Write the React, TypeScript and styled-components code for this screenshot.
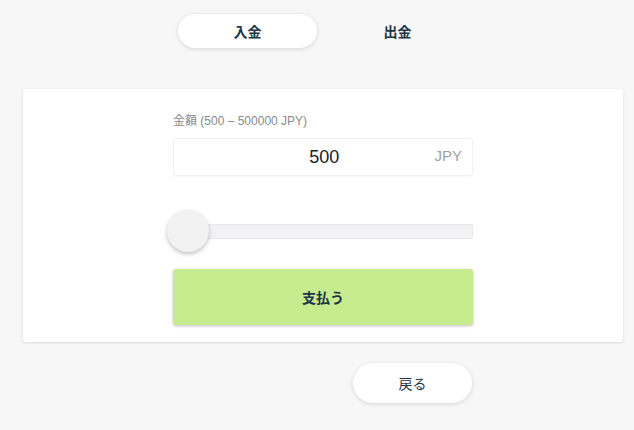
import styled, { createGlobalStyle } from "styled-components";
import { FC, useState } from "react";

const GlobalStyle = createGlobalStyle`
  html, body {
    margin: 0;
    padding: 0;
    background: #f7f7f7;
    font-family: "Liberation Sans", Arial, "Noto Sans CJK JP", sans-serif;
  }
`;

type Tab = "deposit" | "withdraw";

const App: FC = () => {
  const [tab, setTab] = useState<Tab>("deposit");
  const [amount, setAmount] = useState(500);

  return (
    <Page>
      <GlobalStyle />
      <Tabs>
        <TabButton $active={tab === "deposit"} onClick={() => setTab("deposit")}>
          入金
        </TabButton>
        <TabButton $active={tab === "withdraw"} onClick={() => setTab("withdraw")}>
          出金
        </TabButton>
      </Tabs>
      <Card>
        <Form>
          <Label>金額 (500 – 500000 JPY)</Label>
          <InputBox>
            <AmountInput
              value={amount}
              onChange={(e) => setAmount(Number(e.target.value) || 0)}
            />
            <Currency>JPY</Currency>
          </InputBox>
          <Slider>
            <Track />
            <Thumb style={{ left: `${((amount - 500) / (500000 - 500)) * 258}px` }} />
          </Slider>
          <PayButton>支払う</PayButton>
        </Form>
      </Card>
      <Footer>
        <BackButton>戻る</BackButton>
      </Footer>
    </Page>
  );
};

export default App;

const Page = styled.div`
  width: 600px;
  margin-left: 23px;
  padding-top: 14px;
  padding-bottom: 28px;
`;

const Tabs = styled.div`
  display: grid;
  grid-template-columns: 150px 150px;
  width: 300px;
  margin: 0 auto;
`;

const TabButton = styled.button<{ $active?: boolean }>`
  height: 34px;
  margin: 0 6px 0 5px;
  border: none;
  border-radius: 17px;
  background: ${({ $active }) => ($active ? "#fff" : "transparent")};
  box-shadow: ${({ $active }) =>
    $active ? "0 1px 4px rgba(0, 0, 0, 0.14)" : "none"};
  font-family: inherit;
  font-size: 14px;
  font-weight: 700;
  color: #1d3548;
  cursor: pointer;
`;

const Card = styled.div`
  margin-top: 41px;
  background: #fff;
  border-radius: 3px;
  box-shadow: 0 1px 3px rgba(0, 0, 0, 0.12);
  padding: 25px 0 17px;
`;

const Form = styled.div`
  width: 300px;
  margin: 0 auto;
  display: flex;
  flex-direction: column;
`;

const Label = styled.div`
  font-size: 12px;
  color: #8a8a8a;
  line-height: 14px;
  margin-bottom: 10px;
`;

const InputBox = styled.div`
  display: flex;
  align-items: center;
  height: 38px;
  box-sizing: border-box;
  border: 1px solid #f0f0f0;
  border-radius: 3px;
  box-shadow: 0 1px 2px rgba(0, 0, 0, 0.04);
  padding: 0 10px 0 12px;
`;

const AmountInput = styled.input`
  flex: 1;
  min-width: 0;
  border: none;
  outline: none;
  background: transparent;
  text-align: center;
  padding: 0 0 0 28px;
  font-family: inherit;
  font-size: 18px;
  color: #222;
`;

const Currency = styled.span`
  font-size: 15px;
  color: #a0a0a0;
  margin-top: -3px;
`;

const Slider = styled.div`
  position: relative;
  height: 44px;
  margin-top: 33px;
  display: flex;
  align-items: center;
`;

const Track = styled.div`
  width: 100%;
  height: 15px;
  box-sizing: border-box;
  background: #f2f2f4;
  border: 1px solid #e8e8ea;
  border-radius: 2px;
`;

const Thumb = styled.div`
  position: absolute;
  top: 1px;
  margin-left: -6px;
  width: 42px;
  height: 42px;
  border-radius: 50%;
  background: #f2f2f3;
  box-shadow: 0 2px 4px rgba(0, 0, 0, 0.25);
`;

const PayButton = styled.button`
  margin-top: 16px;
  height: 56px;
  border: none;
  border-radius: 3px;
  background: #c7ec8f;
  box-shadow: 0 1px 3px rgba(0, 0, 0, 0.25);
  font-family: inherit;
  font-size: 14px;
  font-weight: 700;
  color: #1d3548;
  cursor: pointer;
`;

const Footer = styled.div`
  width: 300px;
  margin: 21px auto 0;
  display: flex;
  justify-content: flex-end;
`;

const BackButton = styled.button`
  width: 119px;
  height: 40px;
  margin-right: 1px;
  border: none;
  border-radius: 20px;
  background: #fff;
  box-shadow: 0 1px 4px rgba(0, 0, 0, 0.14);
  font-family: inherit;
  font-size: 14px;
  color: #1d3548;
  cursor: pointer;
`;
